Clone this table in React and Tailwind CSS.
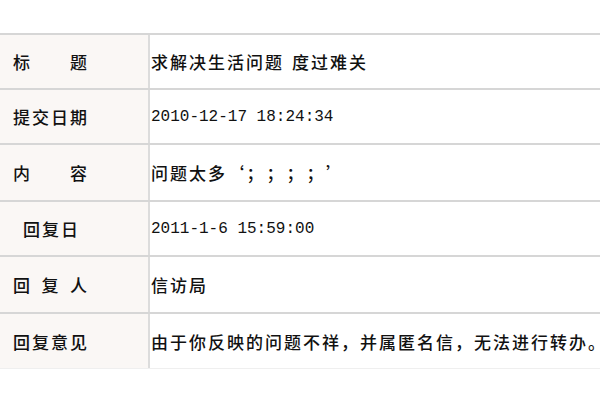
import React from "react";

const cjk = { fontFamily: '"Noto Sans CJK SC", "Noto Sans", sans-serif' };
const mono = { fontFamily: '"Liberation Mono", "Noto Sans CJK SC", monospace' };

function Row({ h, label, children, last }) {
  return (
    <div className={`flex border-t-2 border-[#d6d6d6] ${h} ${last ? "border-b border-b-[#efefef]" : ""}`}>
      <div className="w-[150px] shrink-0 bg-[#faf7f5] border-r-2 border-[#dcdcdc] flex items-center pl-[13px]">
        {label}
      </div>
      <div className="flex-1 flex items-center pl-[1px] overflow-hidden whitespace-nowrap">
        {children}
      </div>
    </div>
  );
}

function Spread({ chars }) {
  return (
    <div className="w-[76px] flex justify-between">
      {chars.map((c, i) => (
        <span key={i}>{c}</span>
      ))}
    </div>
  );
}

export default function App() {
  return (
    <div className="w-[600px] h-[400px] bg-white overflow-hidden text-[#111] text-[17px] font-medium tracking-[2px] leading-none" style={cjk}>
      <div className="h-[33px]" />
      <Row h="h-[55px]" label={<Spread chars={["标", "题"]} />}>
        <span>求解决生活问题</span>
        <span className="w-[8px]" />
        <span>度过难关</span>
      </Row>
      <Row h="h-[55px]" label={<span>提交日期</span>}>
        <span className="text-[16px] font-normal tracking-normal" style={mono}>2010-12-17 18:24:34</span>
      </Row>
      <Row h="h-[57px]" label={<Spread chars={["内", "容"]} />}>
        <span>问题太多</span>
        <span className="inline-block w-[19px] text-right">‘</span>
        <span className="inline-block w-[20px] text-center">；</span>
        <span className="inline-block w-[20px] text-center">；</span>
        <span className="inline-block w-[20px] text-center">；</span>
        <span className="inline-block w-[20px] text-center">；</span>
        <span className="inline-block w-[19px] text-left">’</span>
      </Row>
      <Row h="h-[55px]" label={<span className="pl-[10px]">回复日</span>}>
        <span className="text-[16px] font-normal tracking-normal" style={mono}>2011-1-6 15:59:00</span>
      </Row>
      <Row h="h-[57px]" label={<Spread chars={["回", "复", "人"]} />}>
        <span>信访局</span>
      </Row>
      <Row h="h-[57px]" last label={<span>回复意见</span>}>
        <span>由于你反映的问题不祥，并属匿名信，无法进行转办。</span>
      </Row>
    </div>
  );
}
